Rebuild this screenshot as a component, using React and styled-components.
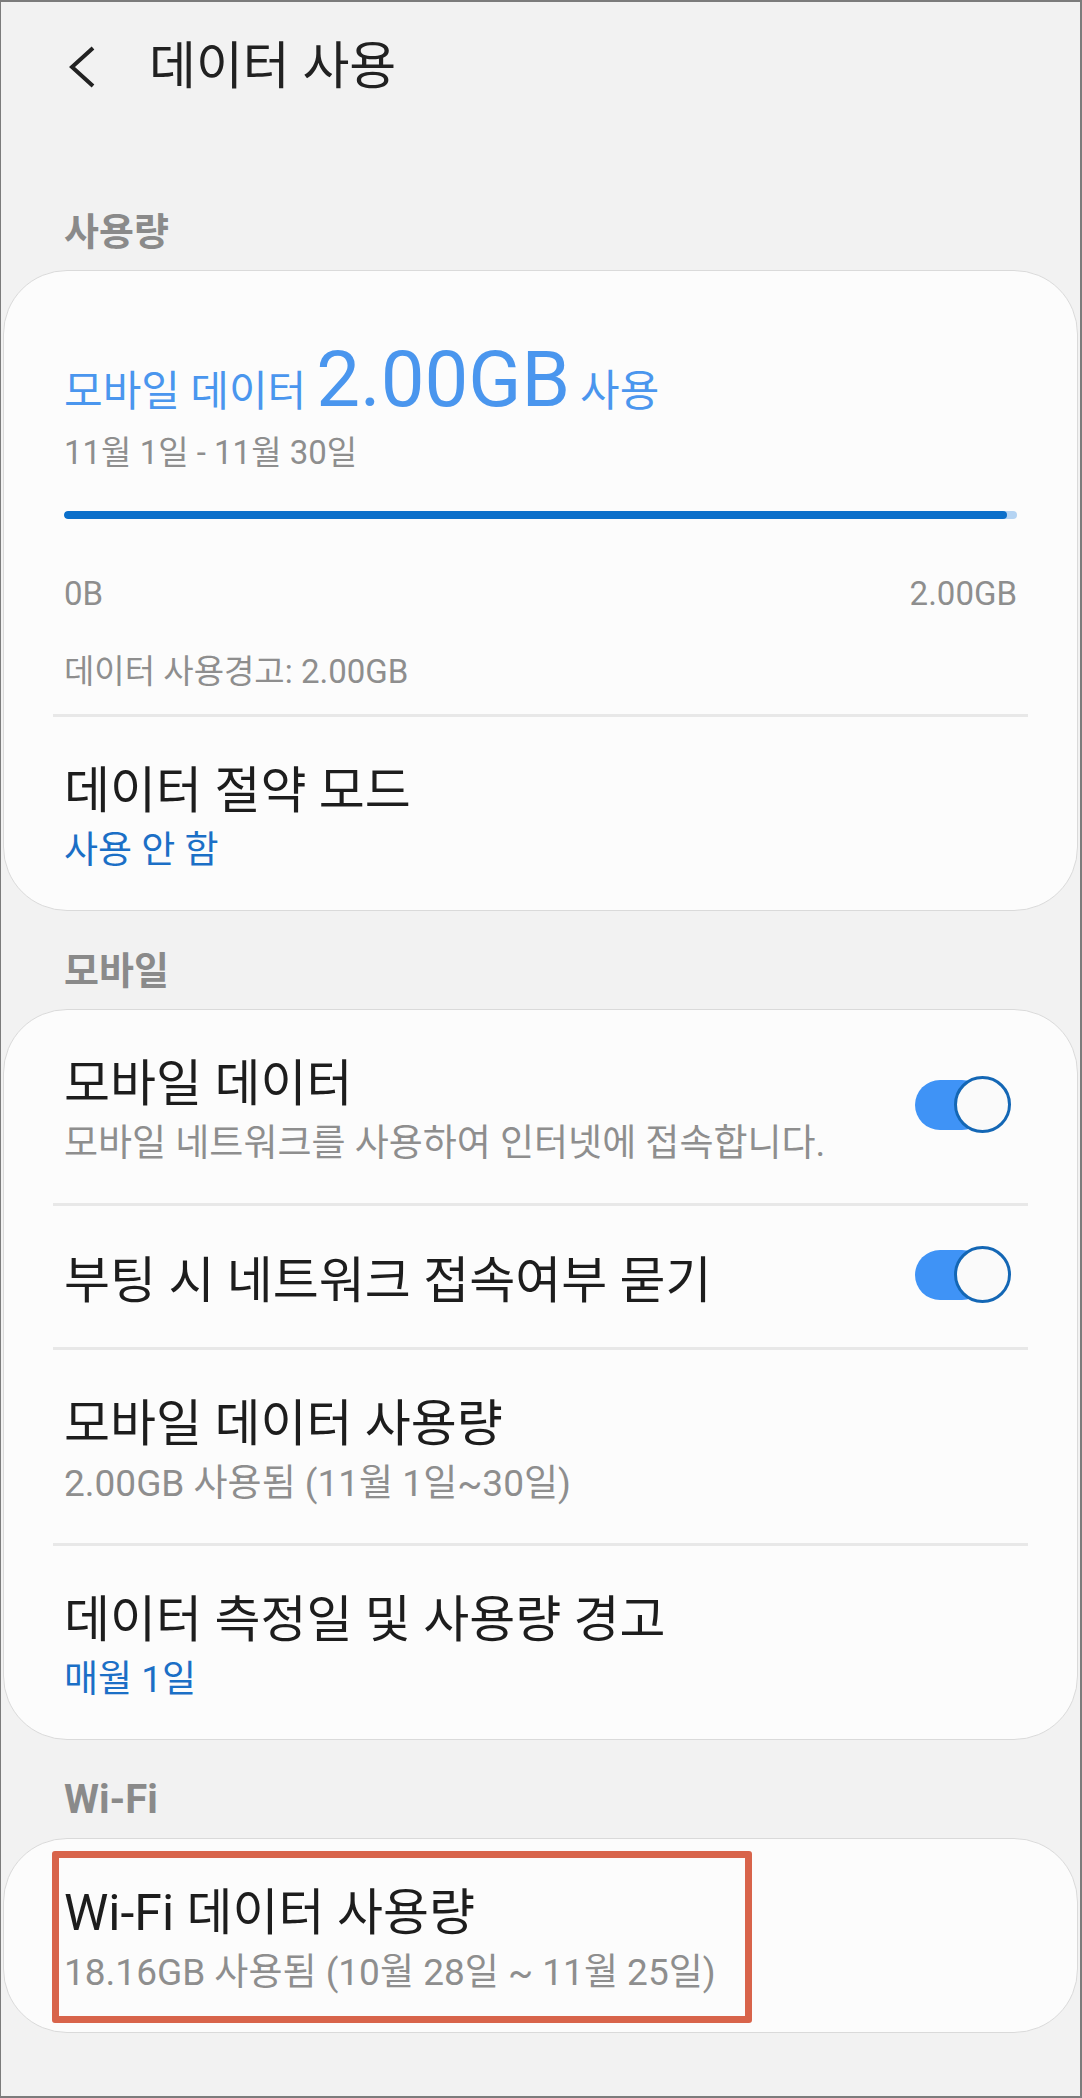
import React from "react";
import styled, { createGlobalStyle } from "styled-components";

const GlobalStyle = createGlobalStyle`
  html, body {
    margin: 0;
    padding: 0;
    background: #f2f2f2;
  }
  body {
    font-family: Roboto, "Noto Sans CJK KR", sans-serif;
  }
`;

// Phone screen frame
const Screen = styled.div`
  box-sizing: border-box;
  width: 1082px;
  min-height: 2098px;
  background: #f2f2f2;
  border: 2px solid #7c7c7c;
  border-left-width: 1px;
  font-family: Roboto, "Noto Sans CJK KR", sans-serif;
`;

const Header = styled.header`
  display: flex;
  align-items: center;
  height: 130px;
  padding-left: 66px;
  margin-bottom: 40px;
`;

const BackButton = styled.svg`
  flex: none;
  width: 30px;
  height: 44px;
`;

const Title = styled.h1`
  margin: 0 0 0 52px;
  font-size: 51px;
  font-weight: 400;
  line-height: 60px;
  color: #212121;
`;

const SectionLabel = styled.div`
  padding: 40px 0 18px 63px;
  font-size: ${(p) => p.size || 38}px;
  line-height: 40px;
  font-weight: 700;
  color: #8a8a8a;
`;

const Card = styled.section`
  margin: 0 2px;
  background: #fcfcfc;
  border: 1px solid #dadada;
  border-radius: 64px;
`;

// Usage summary block
const Summary = styled.div`
  padding: 70px 60px 22px;
`;

const UsageLine = styled.div`
  display: flex;
  align-items: baseline;
  gap: 10px;
  line-height: 1;
  color: #4a96ee;
`;

const UsageText = styled.span`
  font-size: ${(p) => p.size}px;
  line-height: 1;
`;

const Muted = styled.div`
  margin-top: ${(p) => p.gap || 0}px;
  font-size: ${(p) => p.size}px;
  line-height: 40px;
  color: #8e8e8e;
`;

const Bar = styled.div`
  margin-top: 38px;
  height: 8px;
  border-radius: 4px;
  background: #b5d4f3;
  overflow: hidden;
`;

const BarFill = styled.div`
  height: 100%;
  border-radius: 4px;
  background: #0b6fca;
`;

const Scale = styled.div`
  display: flex;
  justify-content: space-between;
  margin-top: 55px;
  font-size: 33px;
  line-height: 40px;
  color: #8e8e8e;
`;

const Divider = styled.div`
  height: 3px;
  margin: 0 49px;
  background: #e8e8e8;
`;

// Setting rows
const Row = styled.div`
  position: relative;
  box-sizing: border-box;
  display: flex;
  align-items: center;
  min-height: 141px;
  padding: 46px 66px 37px 60px;
`;

const RowText = styled.div`
  flex: 1;
  display: flex;
  flex-direction: column;
`;

const RowTitle = styled.div`
  font-size: 50px;
  line-height: 56px;
  color: #1d1d1d;
`;

const RowSub = styled.div`
  margin-top: 10px;
  font-size: 37px;
  line-height: 44px;
  color: ${(p) => (p.accent ? "#1b6fc6" : "#8e8e8e")};
`;

const Toggle = styled.div`
  position: relative;
  flex: none;
  width: 96px;
  height: 57px;
  margin-top: -14px;
`;

const Track = styled.div`
  position: absolute;
  left: 0;
  top: 4px;
  width: 72px;
  height: 50px;
  border-radius: 25px;
  background: ${(p) => (p.on ? "#3f93f6" : "#c9c9c9")};
`;

const Thumb = styled.div`
  position: absolute;
  right: ${(p) => (p.on ? 0 : "auto")};
  left: ${(p) => (p.on ? "auto" : 0)};
  top: 0;
  box-sizing: border-box;
  width: 57px;
  height: 57px;
  border-radius: 50%;
  border: 3px solid #1467b5;
  background: #fafafa;
`;

const Highlight = styled.div`
  position: absolute;
  left: 48px;
  top: 12px;
  box-sizing: border-box;
  width: 700px;
  height: 172px;
  border: 7px solid #d8644b;
  border-radius: 3px;
  pointer-events: none;
`;

const Switch = ({ on }) => (
  <Toggle>
    <Track on={on} />
    <Thumb on={on} />
  </Toggle>
);

const Setting = ({ title, sub, accent, toggle, children }) => (
  <Row>
    <RowText>
      <RowTitle>{title}</RowTitle>
      {sub && <RowSub accent={accent}>{sub}</RowSub>}
    </RowText>
    {toggle !== undefined && <Switch on={toggle} />}
    {children}
  </Row>
);

const App = () => {
  const used = 2.0;
  const limit = 2.0;
  const pct = Math.min(used / limit, 1) * 99;

  return (
    <Screen>
      <GlobalStyle />
      <Header>
        <BackButton viewBox="0 0 30 44">
          <path d="M26 3 L5 22 L26 41" fill="none" stroke="#222" strokeWidth="4" />
        </BackButton>
        <Title>데이터 사용</Title>
      </Header>

      <SectionLabel>사용량</SectionLabel>
      <Card>
        <Summary>
          <UsageLine>
            <UsageText size={42}>모바일 데이터</UsageText>
            <UsageText size={78}>2.00GB</UsageText>
            <UsageText size={43}>사용</UsageText>
          </UsageLine>
          <Muted size={33} gap={14}>11월 1일 - 11월 30일</Muted>
          <Bar>
            <BarFill style={{ width: `${pct}%` }} />
          </Bar>
          <Scale>
            <span>0B</span>
            <span>2.00GB</span>
          </Scale>
          <Muted size={33} gap={38}>데이터 사용경고: 2.00GB</Muted>
        </Summary>
        <Divider />
        <Setting title="데이터 절약 모드" sub="사용 안 함" accent />
      </Card>

      <SectionLabel>모바일</SectionLabel>
      <Card>
        <Setting
          title="모바일 데이터"
          sub="모바일 네트워크를 사용하여 인터넷에 접속합니다."
          toggle
        />
        <Divider />
        <Setting title="부팅 시 네트워크 접속여부 묻기" toggle />
        <Divider />
        <Setting title="모바일 데이터 사용량" sub="2.00GB 사용됨 (11월 1일~30일)" />
        <Divider />
        <Setting title="데이터 측정일 및 사용량 경고" sub="매월 1일" accent />
      </Card>

      <SectionLabel size={40}>Wi-Fi</SectionLabel>
      <Card>
        <Setting title="Wi-Fi 데이터 사용량" sub="18.16GB 사용됨 (10월 28일 ~ 11월 25일)">
          <Highlight />
        </Setting>
      </Card>
    </Screen>
  );
};

export default App;
